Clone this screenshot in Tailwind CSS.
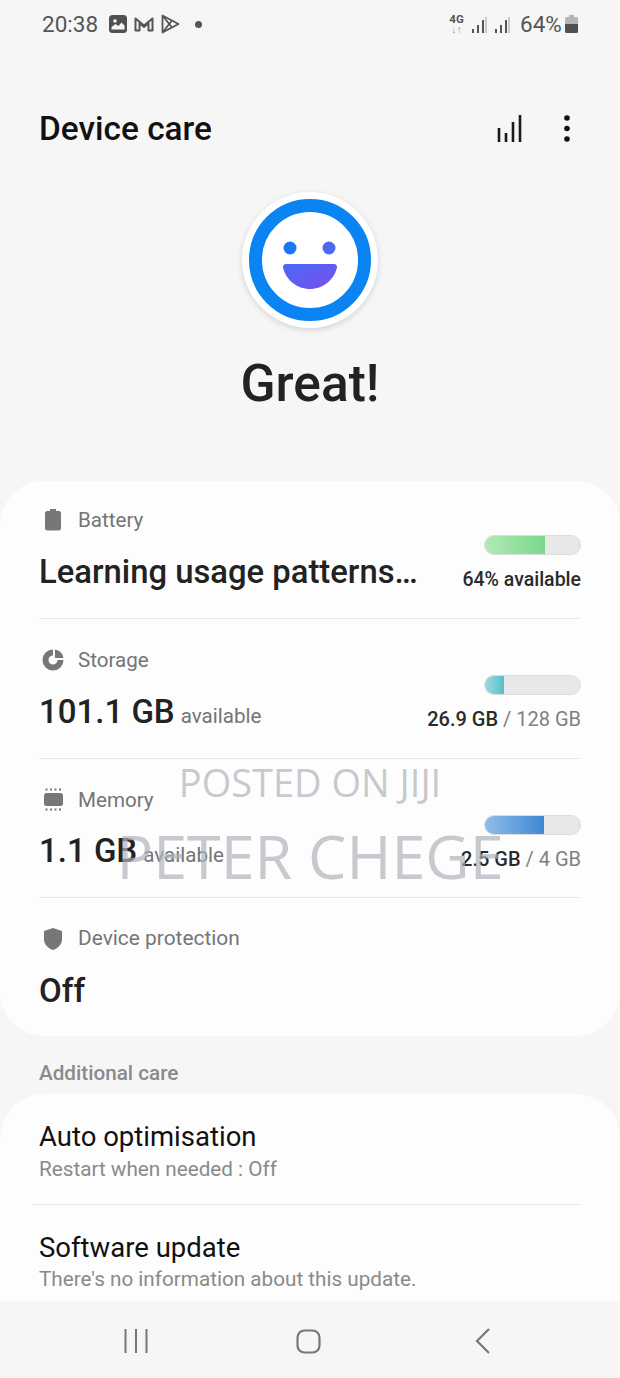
<!DOCTYPE html>
<html lang="en">
<head>
    <meta charset="UTF-8">
    <meta name="viewport" content="width=device-width, initial-scale=1.0">
    <title>Device care</title>
    <script src="https://cdn.jsdelivr.net/npm/@tailwindcss/browser@4"></script>
</head>
<body class="bg-[#f6f6f6] font-['Roboto',sans-serif]">
<div class="relative w-[620px] h-[1378px] overflow-hidden flex flex-col">

    <!-- Status bar -->
    <div class="h-[48px] shrink-0 flex items-center justify-between pl-[42px] pr-[42px] text-[#555555]">
        <div class="flex items-center">
            <span class="text-[22.500px] leading-none w-[57px]">20:38</span>
            <svg class="ml-[10px] w-[18px] h-[18px]" viewBox="0 0 18 18"><rect width="18" height="18" rx="3.500" fill="#505050"/><circle cx="6" cy="6" r="1.800" fill="#f6f6f6"/><path d="M2.500 14.500v-2.500l4-3 3 2 3-3.500 3 3v4z" fill="#f6f6f6"/></svg>
            <svg class="ml-[7px] w-[20px] h-[16px]" viewBox="0 0 20 16" fill="none" stroke="#555" stroke-width="2" stroke-linejoin="round"><path d="M1.500 14.500V2.500L10 9.500l8.500-7v12h-4V7L10 11 5.500 7v7.500z"/></svg>
            <svg class="ml-[7px] w-[19px] h-[20px]" viewBox="0 0 19 20" fill="none" stroke="#555" stroke-width="1.800" stroke-linejoin="round"><path d="M1.500 1.500v17l16-8.500zM1.500 1.500l9.500 12M1.500 18.500l9.500-12"/></svg>
            <span class="ml-[15px] w-[7px] h-[7px] rounded-full bg-[#555555]"></span>
        </div>
        <div class="flex items-center">
            <div class="flex flex-col items-center leading-none mr-[7px] w-[15px]">
                <span class="text-[11.500px] font-bold text-[#555555] leading-[11px]">4G</span>
                <span class="text-[11px] text-[#a5a5a5] leading-[9px]">↓↑</span>
            </div>
            <svg class="w-[16px] h-[17px]" viewBox="0 0 16 17" stroke-width="2"><path d="M2 17v-4M7 17v-8M12 17V4" stroke="#555"/><path d="M15 17V1" stroke="#bbb" stroke-width="1.500"/></svg>
            <svg class="ml-[7px] w-[16px] h-[17px]" viewBox="0 0 16 17" stroke-width="2"><path d="M2 17v-4M7 17v-8M12 17V4" stroke="#555"/><path d="M15 17V1" stroke="#bbb" stroke-width="1.500"/></svg>
            <span class="ml-[10px] text-[22.500px] leading-none w-[42px]">64%</span>
            <svg class="ml-[3px] w-[13px] h-[18px]" viewBox="0 0 13 18"><path d="M4 0h5v2h2.500a1.500 1.500 0 0 1 1.500 1.500V9H0V3.500A1.500 1.500 0 0 1 1.500 2H4z" fill="#b5b5b5"/><path d="M0 9h13v7.500a1.500 1.500 0 0 1-1.500 1.500h-10A1.500 1.500 0 0 1 0 16.500z" fill="#505050"/></svg>
        </div>
    </div>

    <!-- App bar -->
    <div class="h-[64px] mt-[48px] shrink-0 flex items-center justify-between pl-[39px] pr-[50px]">
        <h1 class="text-[33.400px] font-medium text-[#111111] leading-none pt-[2px]">Device care</h1>
        <div class="flex items-center gap-[41px]">
            <svg class="w-[26px] h-[29px]" viewBox="0 0 26 29" stroke="#1a1a1a" stroke-width="2.600"><path d="M2 28V14M9 28v-9M16 28V8M23 28V1"/></svg>
            <svg class="w-[6px] h-[27px]" viewBox="0 0 6 27" fill="#111111"><circle cx="3" cy="3" r="2.800"/><circle cx="3" cy="13.500" r="2.800"/><circle cx="3" cy="24" r="2.800"/></svg>
        </div>
    </div>

    <!-- Status hero -->
    <div class="flex flex-col items-center shrink-0 mt-[32px]">
        <div class="w-[136px] h-[136px] rounded-full bg-white shadow-[0_2px_6px_rgba(0,0,0,0.14)] flex items-center justify-center">
            <svg class="w-[124px] h-[124px]" viewBox="0 0 124 124">
                <defs>
                    <linearGradient id="mouth" x1="0" y1="0" x2="1" y2="1"><stop offset="0" stop-color="#4a69f5"/><stop offset="1" stop-color="#7a4fee"/></linearGradient>
                </defs>
                <circle cx="62" cy="62" r="54.500" fill="#fff" stroke="#0a84f2" stroke-width="13"/>
                <circle cx="42" cy="50" r="6.500" fill="#1b78f2"/>
                <circle cx="81" cy="50" r="6.500" fill="#4a6af0"/>
                <path d="M38 66h48a3 3 0 0 1 3 3.500C86 82 75 91 62 91S38 82 35 69.500A3 3 0 0 1 38 66z" fill="url(#mouth)"/>
            </svg>
        </div>
        <div class="mt-[26px] text-[51.500px] font-medium leading-[60px] text-[#222222]">Great!</div>
    </div>

    <!-- Summary card -->
    <div class="mt-[67px] h-[555px] shrink-0 bg-[#fdfdfd] rounded-[44px] px-[39px] pt-[19px]">
        <div class="h-[119px] border-b border-[#e9e9e9] flex justify-between">
            <div>
                <div class="flex items-center h-[40px] text-[20.600px] text-[#757575]">
                    <svg class="w-[28px] h-[22px] mr-[11px]" viewBox="0 0 28 22"><path d="M11 0h6v2h1.500A2.500 2.500 0 0 1 22 4.500V19a2.500 2.500 0 0 1-2.500 2.500h-11A2.500 2.500 0 0 1 6 19V4.500A2.500 2.500 0 0 1 8.500 2H11z" fill="#777"/></svg>
                    Battery
                </div>
                <div class="text-[32.800px] font-medium text-[#222222] leading-[38px] mt-[13px]">Learning usage patterns…</div>
            </div>
            <div class="flex flex-col items-end pt-[35px]">
                <div class="w-[97px] h-[20px] rounded-full bg-[#e8e8e8] border border-[#dddddd] overflow-hidden">
                    <div class="h-full w-[63%] bg-gradient-to-r from-[#b4e8b4] to-[#78d88f]"></div>
                </div>
                <div class="mt-[13px] text-[19.500px] font-medium text-[#2a2a2a] leading-[24px]">64% available</div>
            </div>
        </div>

        <div class="h-[140px] border-b border-[#e9e9e9] flex justify-between">
            <div class="pt-[21px]">
                <div class="flex items-center h-[40px] text-[20.600px] text-[#757575]">
                    <svg class="w-[28px] h-[22px] mr-[11px]" viewBox="0 0 28 22" fill="#777"><path d="M14 .5a10.500 10.500 0 1 0 10.500 10.500h-6a4.500 4.500 0 1 1-4.500-4.500z"/><path d="M16 .5a10.500 10.500 0 0 1 8.500 8.500H16z"/></svg>
                    Storage
                </div>
                <div class="flex items-baseline mt-[13px]">
                    <span class="text-[33px] font-medium text-[#222222] leading-[38px]">101.1 GB</span>
                    <span class="ml-[6px] text-[20.600px] text-[#757575]">available</span>
                </div>
            </div>
            <div class="flex flex-col items-end pt-[56px]">
                <div class="w-[97px] h-[20px] rounded-full bg-[#e8e8e8] border border-[#dddddd] overflow-hidden">
                    <div class="h-full w-[20%] bg-gradient-to-r from-[#9ed9e0] to-[#52c0c8]"></div>
                </div>
                <div class="mt-[12px] text-[20px] leading-[24px] text-[#808080]"><span class="font-medium text-[#2a2a2a]">26.9 GB</span> / 128 GB</div>
            </div>
        </div>

        <div class="h-[139px] border-b border-[#e9e9e9] flex justify-between">
            <div class="pt-[21px]">
                <div class="flex items-center h-[40px] text-[20.600px] text-[#757575]">
                    <svg class="w-[28px] h-[24px] mr-[11px]" viewBox="0 0 28 24"><rect x="5" y="5" width="19" height="13" rx="2.500" fill="#777"/><path d="M6.500 1.500h17M6.500 21.500h17" stroke="#777" stroke-width="2" stroke-dasharray="2 2.500"/></svg>
                    Memory
                </div>
                <div class="flex items-baseline mt-[12px]">
                    <span class="text-[33px] font-medium text-[#222222] leading-[38px]">1.1 GB</span>
                    <span class="ml-[6px] text-[20.600px] text-[#757575]">available</span>
                </div>
            </div>
            <div class="flex flex-col items-end pt-[56px]">
                <div class="w-[97px] h-[20px] rounded-full bg-[#e8e8e8] border border-[#dddddd] overflow-hidden">
                    <div class="h-full w-[62%] bg-gradient-to-r from-[#8fbde8] to-[#3f88d4]"></div>
                </div>
                <div class="mt-[12px] text-[20px] leading-[24px] text-[#808080]"><span class="font-medium text-[#2a2a2a]">2.5 GB</span> / 4 GB</div>
            </div>
        </div>

        <div class="pt-[21px]">
            <div class="flex items-center h-[40px] text-[20.900px] text-[#757575]">
                <svg class="w-[28px] h-[24px] mr-[11px]" viewBox="0 0 28 24"><path d="M14 1l9 3v8c0 5.500-3.500 9-9 11-5.500-2-9-5.500-9-11V4z" fill="#777"/></svg>
                Device protection
            </div>
            <div class="text-[33px] font-medium text-[#222222] leading-[38px] mt-[13px]">Off</div>
        </div>
    </div>

    <div class="h-[58px] pt-[18px] shrink-0 flex items-center pl-[39px] text-[20.700px] font-medium text-[#8a8a8a]">Additional care</div>

    <!-- Additional care list -->
    <div class="flex-1 min-h-0 bg-[#fdfdfd] rounded-t-[44px] px-[39px] overflow-hidden">
        <div class="h-[111px] pt-[25px] border-b border-[#e6e6e6] -ml-[7px] pl-[7px]">
            <div class="text-[27.500px] leading-[36px] text-[#111111]">Auto optimisation</div>
            <div class="text-[20.700px] leading-[28px] text-[#8a8a8a]">Restart when needed : Off</div>
        </div>
        <div class="pt-[25px]">
            <div class="text-[27.500px] leading-[36px] text-[#111111]">Software update</div>
            <div class="text-[20.700px] leading-[26px] text-[#8a8a8a]">There's no information about this update.</div>
        </div>
    </div>

    <!-- Navigation bar -->
    <div class="h-[77px] shrink-0 bg-[#f6f6f6] flex items-center relative">
        <svg class="absolute left-[124px] top-[28px] w-[24px] h-[24px]" viewBox="0 0 24 24" stroke="#777" stroke-width="2"><path d="M1.500 0v24M12 0v24M22.500 0v24"/></svg>
        <svg class="absolute left-[296px] top-[28px] w-[25px] h-[25px]" viewBox="0 0 25 25" fill="none" stroke="#777" stroke-width="2.200"><rect x="1.500" y="1.500" width="22" height="22" rx="7"/></svg>
        <svg class="absolute left-[475px] top-[27px] w-[16px] h-[26px]" viewBox="0 0 16 26" fill="none" stroke="#777" stroke-width="2.200"><path d="M14 1L2 13l12 12"/></svg>
    </div>

    <!-- Watermark -->
    <div class="absolute left-0 top-[758px] w-[620px] text-center font-['Open_Sans',sans-serif] text-[#aeb2b9]/70 pointer-events-none">
        <div class="text-[38px] leading-[48px]">POSTED ON JIJI</div>
        <div class="text-[61px] leading-[80px] mt-[10px]">PETER CHEGE</div>
    </div>
</div>
</body>
</html>
